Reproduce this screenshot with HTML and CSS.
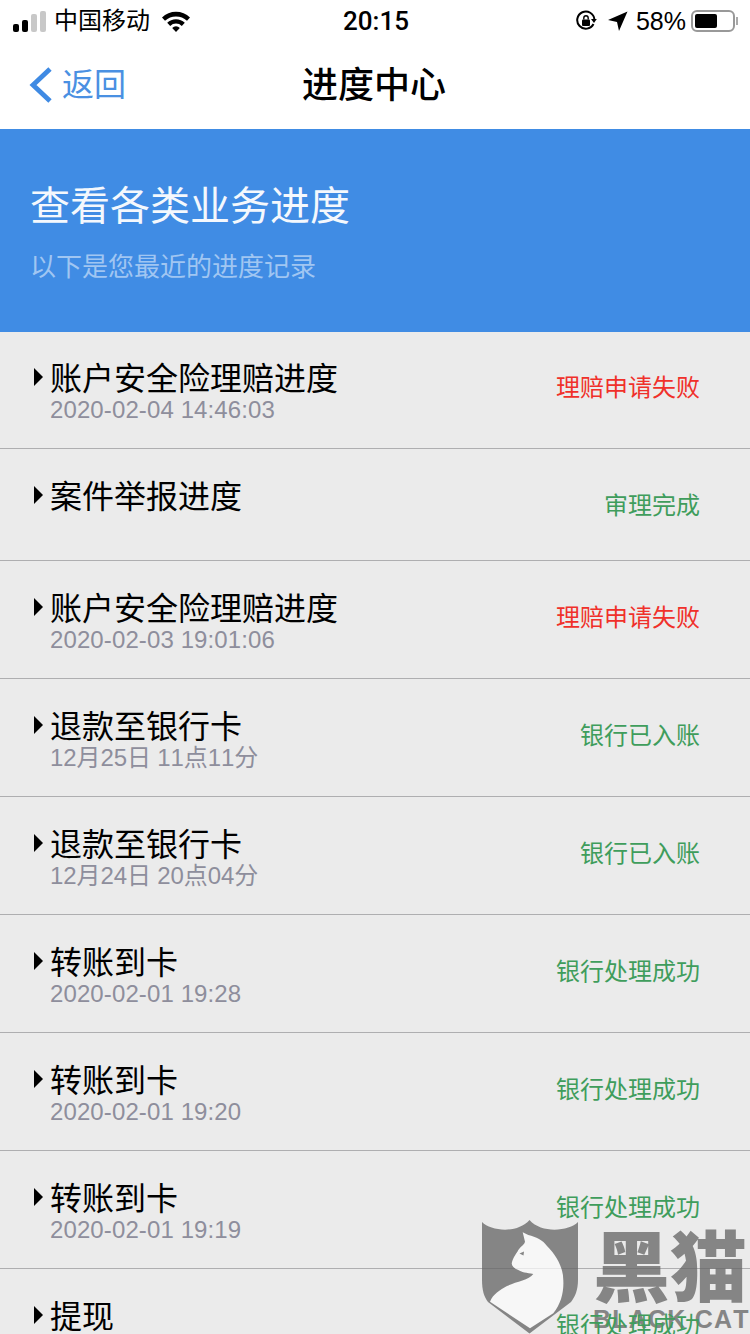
FILE: index.html
```html
<!DOCTYPE html>
<html>

<head>
    <meta charset="utf-8" />
    <title>进度中心</title>
    <link rel="stylesheet" href="styles.css">
</head>

<body>
    <div id="container">
        <div class="statusBar">
            <div class="statusLeft">
                <div class="signal">
                    <span class="bar bar1"></span>
                    <span class="bar bar2"></span>
                    <span class="bar bar3"></span>
                    <span class="bar bar4"></span>
                </div>
                <span class="carrier">中国移动</span>
                <svg class="wifi" width="30" height="22" viewBox="0 0 30 22">
                    <path d="M1 7.5 A20 20 0 0 1 29 7.5 L26 10.8 A16 16 0 0 0 4 10.8 Z" fill="#000" />
                    <path d="M6.2 12.8 A12.5 12.5 0 0 1 23.8 12.8 L20.8 16 A8.2 8.2 0 0 0 9.2 16 Z" fill="#000" />
                    <path d="M11.2 18 A5.2 5.2 0 0 1 18.8 18 L15 22 Z" fill="#000" />
                </svg>
            </div>
            <div class="clock">20:15</div>
            <div class="statusRight">
                <svg class="lock" width="22" height="22" viewBox="0 0 22 22">
                    <path d="M18.5 14 A8.6 8.6 0 1 1 19.4 9.5" fill="none" stroke="#000" stroke-width="2" />
                    <path d="M16 9 L21.8 9 L19 13 Z" fill="#000" />
                    <rect x="7" y="9.5" width="8" height="6.5" rx="1" fill="#000" />
                    <path d="M8.8 9.5 V8 A2.2 2.2 0 0 1 13.2 8 V9.5" fill="none" stroke="#000" stroke-width="1.4" />
                </svg>
                <svg class="arrowIcon" width="20" height="20" viewBox="0 0 20 20">
                    <path d="M19.5 0.5 L11 20 L9 11 L0 9 Z" fill="#000" />
                </svg>
                <span class="percent">58%</span>
                <div class="battery">
                    <div class="batteryFill"></div>
                </div>
                <span class="batteryTip"></span>
            </div>
        </div>

        <div class="navBar">
            <div class="back">
                <svg width="24" height="36" viewBox="0 0 24 36">
                    <path d="M22 2 L5 18 L22 34" fill="none" stroke="#3f8ae3" stroke-width="4.8" />
                </svg>
                <span>返回</span>
            </div>
            <h1 class="navTitle">进度中心</h1>
        </div>

        <div class="banner">
            <h2 class="bannerTitle">查看各类业务进度</h2>
            <p class="bannerSub">以下是您最近的进度记录</p>
        </div>

        <div class="list">
            <div class="row first">
                <div class="rowMain">
                    <div class="rowTitle"><span class="tri"></span>账户安全险理赔进度</div>
                    <div class="rowTime">2020-02-04 14:46:03</div>
                </div>
                <div class="rowState fail">理赔申请失败</div>
            </div>
            <div class="row short">
                <div class="rowMain">
                    <div class="rowTitle"><span class="tri"></span>案件举报进度</div>
                    <div class="rowTime"></div>
                </div>
                <div class="rowState done">审理完成</div>
            </div>
            <div class="row">
                <div class="rowMain">
                    <div class="rowTitle"><span class="tri"></span>账户安全险理赔进度</div>
                    <div class="rowTime">2020-02-03 19:01:06</div>
                </div>
                <div class="rowState fail">理赔申请失败</div>
            </div>
            <div class="row">
                <div class="rowMain">
                    <div class="rowTitle"><span class="tri"></span>退款至银行卡</div>
                    <div class="rowTime cn">12月25日 11点11分</div>
                </div>
                <div class="rowState done">银行已入账</div>
            </div>
            <div class="row">
                <div class="rowMain">
                    <div class="rowTitle"><span class="tri"></span>退款至银行卡</div>
                    <div class="rowTime cn">12月24日 20点04分</div>
                </div>
                <div class="rowState done">银行已入账</div>
            </div>
            <div class="row">
                <div class="rowMain">
                    <div class="rowTitle"><span class="tri"></span>转账到卡</div>
                    <div class="rowTime">2020-02-01 19:28</div>
                </div>
                <div class="rowState done">银行处理成功</div>
            </div>
            <div class="row">
                <div class="rowMain">
                    <div class="rowTitle"><span class="tri"></span>转账到卡</div>
                    <div class="rowTime">2020-02-01 19:20</div>
                </div>
                <div class="rowState done">银行处理成功</div>
            </div>
            <div class="row">
                <div class="rowMain">
                    <div class="rowTitle"><span class="tri"></span>转账到卡</div>
                    <div class="rowTime">2020-02-01 19:19</div>
                </div>
                <div class="rowState done">银行处理成功</div>
            </div>
            <div class="row">
                <div class="rowMain">
                    <div class="rowTitle"><span class="tri"></span>提现</div>
                    <div class="rowTime"></div>
                </div>
                <div class="rowState done">银行处理成功</div>
            </div>
        </div>

        <div class="watermark">
            <svg class="shield" width="98" height="114" viewBox="0 0 98 114">
                <path d="M1 2 C10 11 36 14 48.5 0 C61 14 88 11 97 2 V60 C97 70 94 77 90 82 L48.5 113.5 L7 82 C3 77 1 70 1 60 Z" fill="#646464" />
                <path d="M41.7 12.3 L47.3 15 C55 17 62 20 66 26 C76 36 82.3 48 82.3 60 C83 72 80 84 72.3 93.3 L49 108.3 L9 81.7 C12 74 19 70 26 66 C35 61.7 48 60 52.3 54 C46 53 40 52 37.3 50 C33 48.5 30.7 46 30.7 43.3 C32 37 36 33 37.3 30 C40 26 43 25 44 21.7 Z" fill="#fbfbfb" />
                <path d="M38.5 33.5 L43 31.5 L42.5 35.5 Z" fill="#646464" />
            </svg>
            <div class="markText">
                <div class="markCn">黑猫</div>
                <div class="markEn">BLACK CAT</div>
            </div>
        </div>
    </div>
</body>

</html>
```

FILE: styles.css
```css
html {
    margin: 0px;
    padding: 0px;
}

body {
    font-family: 'Liberation Sans', 'Noto Sans CJK SC', sans-serif;
    font-kerning: none;
    margin: 0px;
    padding: 0px;
    color: #000;
    background-color: #fff;
}

#container {
    width: 750px;
    height: 1334px;
    overflow: hidden;
    position: relative;
}

.statusBar {
    height: 42px;
    display: flex;
    align-items: center;
    justify-content: space-between;
    padding: 0px 12px 0px 13px;
    position: relative;
}

.statusLeft {
    display: flex;
    align-items: center;
}

.signal {
    display: flex;
    align-items: flex-end;
    gap: 3px;
    height: 22px;
    margin-right: 8px;
}

.bar {
    width: 6px;
    border-radius: 2px;
    background-color: #c8c8c8;
}

.bar1 {
    height: 8px;
    background-color: #000;
}

.bar2 {
    height: 12px;
    background-color: #000;
}

.bar3 {
    height: 18px;
}

.bar4 {
    height: 21px;
}

.carrier {
    font-size: 24px;
    line-height: 30px;
    margin-right: 11px;
}

.clock {
    position: absolute;
    left: 343px;
    font-family: 'Roboto', sans-serif;
    font-size: 26px;
    font-weight: 500;
    line-height: 30px;
}

.statusRight {
    display: flex;
    align-items: center;
}

.lock {
    margin-right: 11px;
}

.arrowIcon {
    margin-right: 8px;
}

.percent {
    font-size: 25px;
    line-height: 30px;
    margin-right: 5px;
}

.battery {
    width: 44px;
    height: 22px;
    box-sizing: border-box;
    border: 2px solid #999;
    border-radius: 6px;
    padding: 2px;
}

.batteryFill {
    width: 22px;
    height: 14px;
    border-radius: 2px;
    background-color: #000;
}

.batteryTip {
    width: 2px;
    height: 8px;
    margin-left: 1px;
    background-color: #aaa;
}

.navBar {
    height: 87px;
    display: flex;
    align-items: center;
    justify-content: center;
    position: relative;
}

.back {
    position: absolute;
    left: 28px;
    top: 24px;
    display: flex;
    align-items: center;
    gap: 10px;
    color: #4a90e2;
    font-size: 32px;
    line-height: 38px;
}

.navTitle {
    font-size: 36px;
    font-weight: 500;
    line-height: 44px;
    margin: 0px 2px 0px 0px;
}

.banner {
    height: 203px;
    box-sizing: border-box;
    padding: 50px 0px 0px 30px;
    background-color: #408ce4;
}

.bannerTitle {
    font-size: 40px;
    font-weight: normal;
    line-height: 54px;
    color: #f4f8fd;
    margin: 0px;
}

.bannerSub {
    font-size: 26px;
    line-height: 36px;
    color: #a0c6f2;
    margin: 16px 0px 0px;
}

.list {
    background-color: #ebebeb;
}

.row {
    height: 118px;
    box-sizing: border-box;
    display: flex;
    justify-content: space-between;
    padding: 28px 50px 0px 50px;
    border-bottom: 1px solid #aeaeb0;
}

.row.first {
    height: 117px;
    padding-top: 27px;
}

.row.short {
    height: 112px;
}

.rowTitle {
    font-size: 32px;
    line-height: 40px;
    position: relative;
}

.tri {
    position: absolute;
    left: -16px;
    top: 9px;
    width: 0px;
    height: 0px;
    border-style: solid;
    border-width: 9px 0px 9px 9px;
    border-color: transparent transparent transparent #000;
}

.rowTime {
    font-size: 24px;
    line-height: 28px;
    margin-top: -3px;
    letter-spacing: 0.11px;
    color: #8e8e9c;
}

.rowTime.cn {
    letter-spacing: -0.1px;
}

.rowState {
    font-size: 24px;
    line-height: 34px;
    margin-top: 12px;
    position: relative;
    z-index: 1;
}

.fail {
    color: #f0302a;
}

.done {
    color: #3f9d5c;
}

.watermark {
    position: absolute;
    left: 481px;
    top: 1220px;
    display: flex;
    gap: 14px;
    opacity: 0.75;
}

.markText {
    width: 156px;
}

.markCn {
    font-family: 'Noto Sans CJK SC', sans-serif;
    font-size: 77px;
    font-weight: 900;
    line-height: 86px;
    color: #646464;
    white-space: nowrap;
}

.markEn {
    font-family: 'Liberation Sans', sans-serif;
    font-size: 25px;
    font-weight: bold;
    line-height: 26px;
    letter-spacing: 1.2px;
    color: #646464;
    white-space: nowrap;
}
```
